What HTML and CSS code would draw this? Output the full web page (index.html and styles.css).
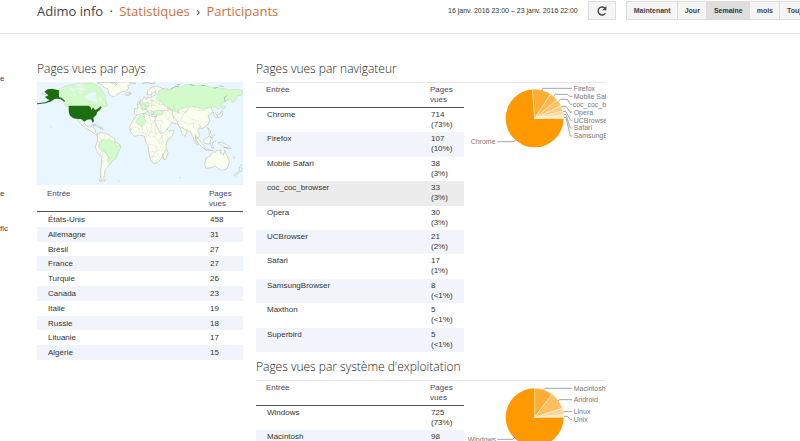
FILE: index.html
```html
<!DOCTYPE html>
<html lang="fr">
<head>
<meta charset="utf-8">
<title>Adimo info · Statistiques › Participants</title>
<link rel="stylesheet" href="styles.css">
</head>
<body>
<header class="topbar">
  <h1 class="crumbs">Adimo info <span class="sep">·</span> <a href="#">Statistiques</a> <span class="sep">›</span> <a href="#">Participants</a></h1>
  <div class="toolbar">
    <span class="range">16 janv. 2016 23:00 – 23 janv. 2016 22:00</span>
    <button class="btn refresh" type="button" aria-label="Actualiser">
      <svg viewBox="0 0 12 12" width="12" height="12"><path d="M9.4 8.3A4 4 0 1 1 9 3.2" fill="none" stroke="#444" stroke-width="1.4"/><path d="M10.4 1v4.2H6.2z" fill="#444"/></svg>
    </button>
    <div class="group">
      <button class="btn" type="button">Maintenant</button>
      <button class="btn" type="button">Jour</button>
      <button class="btn active" type="button">Semaine</button>
      <button class="btn" type="button">mois</button>
      <button class="btn" type="button">Toujours</button>
    </div>
  </div>
</header>
<main class="content">
  <nav class="side">
    <a href="#">e</a>
    <a href="#" class="far">e</a>
    <a href="#" class="near">fic</a>
  </nav>
  <section class="countries">
    <h2>Pages vues par pays</h2>
    <svg class="map" viewBox="20 81 618 309" role="img" aria-label="Carte du monde">
      <rect x="20" y="81" width="618" height="309" fill="#eaf6fe"/>
      <g class="land">
        <path d="M200 83l14 5 8 10 10 3 3 14 8 8 9 3 9-9 13-7 13-2 8-8-3-8 8-3-1-6 8-3z"/>
        <path d="M284 116l7-5 9 1 3 5-9 5-8-1z"/>
        <path d="M129 189l20 1 8 5 5 10 5 5 6 6 9-1 4-6 7 1-4 8 2 4 5 1-1 9 8 5-4 3-10-7-8-6-12-5-9-7-12-12-7-12-6-4z"/>
        <path d="M187 210l8-2 12 6 8 5-9-1-9-6zM208 218l7 1 5 4-9-1z"/>
        <path d="M201 238l6-5 9 1 10 1 10 5 8 6 9 5 1 10 15 8 1 8-8 14-3 13-12 7-7 14-10 13-6 8-2 16-2 9 3 8-6-2-6-10v-18l2-20 1-22-12-14-7-16 4-13 3-7z"/>
        <path d="M312 176l1-15 12-2-5-9 10-8 7-8 4-10 4 7 8-3 14-3 10-7-1-9-7 4-9 7-10-3 1-9 13-10 12-5 12 3 7 5 18 1v78l-13-2-12-5-5 4-3 6-7-5-5-9-7-2 6 10-3 2-9-10-8 2-9 7-7 8z"/>
        <path d="M329 133l6 4 4 10 2 4-12 1 3-8zM322 141l6-1-1 7-6 2z"/>
        <path d="M318 181l12-5 16-1 10 6 15 4 16-1 9 3 2 9 8 20 9 13 17-3-7 17-15 16-3 15 1 12-11 11-1 10-8 9-8 8-12 1-8-12-4-18-2-18-8-17-4-17-15-3-14 4-12-13-3-16 10-19z"/>
        <path d="M403 290l8-4 2 9-7 20-6-2-1-13z"/>
        <path d="M385 166l18 1 12-3 15 2 10 7 16-3 20 1 12 14-7 20-9 15-7 24-9-7-8-20-4-9-20-5-5 9-18 21-10 3-9-16-9-21 3-9 4-10-17-2z"/>
        <path d="M429 152l17-3 20-5 21 8 18 3 16-4 18 3 8 13-3 8-11 7 5 13-4 12-16 13-14-1-2 8 7 13-6 11-8-12 1 20 7 12-9-8-6-17-8-16-16-7-18-9-7-18-14-19z"/>
        <path d="M548 173l5-2 8 13-4 5-6-8zM561 181l8-2 6-13 3 2-2 14-13 7z"/>
        <path d="M575 157l6-4 5 5-8 3zM535 223l6 4-1 8 8 9-2 6-9-8zM495 246l10 6 13 18 7 9-6 1-16-15zM519 255l16-10 8 4-6 18-14-2zM522 282l18 2 8 3-20-1zM540 264l11-3-6 6 5 13-6-2zM563 263l11-1 17 9 12 10-16-3-15-9z"/>
        <path d="M527 309l11-5 9-13 8 1 5-7 12 1-2 8 9 7 5-15 4 13 7 12 2 12-7 17-15 7-11-6-9-8-13 5-15 2-4-13z"/>
        <path d="M627 336l9 5-5 10-4-5zM623 350l4 2-13 12-3-3z"/>
        <path d="M206 374l8 4-4 3zM225 374h4M264 379h3M446 368h4M60 215l3 2M608 305l6 4"/>
      </g>
      <g class="some">
        <path d="M86 104l20-12 36-6 25-2 22 1 20 11 7 13 8 12 2 15 7 15-9 4-10-1-13 8-15 5-7-7-12-5h-59l-7-10-9-18z"/>
        <path d="M377 135l5-14 3-13 9-6 13 5 12-5 17-6 19-1 15-7 25 4 23-1 20 5 33 2 26 6 27-1 13 5-2 12-13 2-9 15-7 7-6-12-13 6-15 8 2 8-8 9-17-9-27 9-23-5-13-5-25 6-17 5 2 10-14-5-14-8-17-9-12-14z"/>
        <path d="M207 261l10-8 12 3 8-3 8 6 9 3 1 7 15 5 1 7-9 15-4 14-12 7-6 12-10-11 4-13-8-12-13-7-9-9z"/>
        <path d="M324 189l5-7 12-4 2 14 4 10-13 14-18-14zM369 169l12-4 15 3 2 9-11 3-15-1zM329 150l13-4 8 8-3 9-11 2zM343 143l11-2 2 14-10 1zM341 162l7-3 7 12 5 4-3 3-8-10zM362 134l9 1-2 5-8-1z"/>
      </g>
      <path class="lakes" d="M115 97l17 4 20-4 17 6-12 5-18-5-12 5zM132 90l18-3 14 4-12 3zM163 125l8-8 18-6 8 3-1 13 5 8 2 9-9-5-14-4-8 1zM126 115l13 5-4 4zM145 108l10 3 1 5-7-3zM205 126l7 5 4 10-8-3z"/>
      <g class="top">
        <path d="M42 110l10-7 13-2 21 5v20l8 3 10 8-1 4-12-8-11-2-8 1-8 7-18 6-26 3v-3l25-3 13-7-7-3-7-6 10-5z"/>
        <path d="M115 152h59l6 3 4 11 4-9 6 8 9-4 8-7 3 3-5 8-8 6-3 9-9 8 2 11-4 4-5-10-12 1-8 6-8-7-12-1-14-3-10-8-3-14z"/>
      </g>
      <path class="borders" d="M207 236l-1 13 9 4M225 237l-2 15M239 242l-3 12M199 258l10 4-1 15 13 14M224 288l-7 12 1 20-7 23 1 25M216 285l-7 10M225 291l13 21M232 113l9 7M340 177l4 18 17 13 13-9v-17M357 182l4 16M374 197h22M327 205l9 8 2 22M305 216l17 1 9 12M316 229l18 4 13 2M347 215l5 13-7 18M365 208l-4 22-10 17M361 230l17 6 18-8M375 206v28M396 199l-6 14 2 20M354 247l19-2 10 12 16 5M373 245l6-11M392 235l7 26M399 239l-12 16M353 268l23 2 5 21-24-1M381 262l17 8M376 290l-10 15v18M382 286l17-2M380 294l8 15-10 9M358 307l18-3M404 239l12 10-16 15"/>
      <path class="borders" d="M402 169l6 20 12 12 10-3M410 166l12 13-7 15M426 168l3 25M438 175l-9 14 6 15M440 172l18 6-7 19-13 5M458 178l12-8M429 152l5 18 16-5 14 6 11-12 17-4M475 160l-14 14M488 153l8 13 20 1 18-11M469 179l13 14 23 5M454 198l21 10 13-4 10-4M489 204l2 15M502 199l9 19M505 208l9 7M352 110l-2 20-4 7M365 104l-3 29M373 97l5 28M356 144l13 4 12-7M357 153l15-2 15 8M362 140l2 19 15 5M370 137l12 9 19 4M321 160l-2 16M327 158l14 5M352 161l14 8M389 134l-3 14 8 5M401 164l10-7 13 5"/>
      <path class="islands" d="M239 83l19 2M262 86l-9 7M303 84l14 1M335 85l17-2 14 3 9-3M421 103l12-8 14-2M440 89l11-2M478 88l14 4M512 91l13 1M568 92l12 3M585 141l-3-14 9-5M291 119l9-4M34 116l8 2M529 218l7 3M550 238l3 4M554 257l2 4M579 276l15 4M301 222l4 2M631 329l4 4M550 101l13-5"/>
    </svg>
    <table class="data plain">
      <thead><tr><th scope="col">Entrée</th><th scope="col" class="num">Pages vues</th></tr></thead>
      <tbody>
        <tr><td>États-Unis</td><td>458</td></tr>
        <tr><td>Allemagne</td><td>31</td></tr>
        <tr><td>Brésil</td><td>27</td></tr>
        <tr><td>France</td><td>27</td></tr>
        <tr><td>Turquie</td><td>26</td></tr>
        <tr><td>Canada</td><td>23</td></tr>
        <tr><td>Italie</td><td>19</td></tr>
        <tr><td>Russie</td><td>18</td></tr>
        <tr><td>Lituanie</td><td>17</td></tr>
        <tr><td>Algérie</td><td>15</td></tr>
      </tbody>
    </table>
  </section>
  <div class="tech">
    <section>
      <h2>Pages vues par navigateur</h2>
      <div class="panel">
        <table class="data full">
          <thead><tr><th scope="col">Entrée</th><th scope="col" class="num">Pages vues</th></tr></thead>
          <tbody>
            <tr><td>Chrome</td><td>714<br>(73%)</td></tr>
            <tr><td>Firefox</td><td>107<br>(10%)</td></tr>
            <tr><td>Mobile Safari</td><td>38<br>(3%)</td></tr>
            <tr class="hover"><td>coc_coc_browser</td><td>33<br>(3%)</td></tr>
            <tr><td>Opera</td><td>30<br>(3%)</td></tr>
            <tr><td>UCBrowser</td><td>21<br>(2%)</td></tr>
            <tr><td>Safari</td><td>17<br>(1%)</td></tr>
            <tr><td>SamsungBrowser</td><td>8<br>(&lt;1%)</td></tr>
            <tr><td>Maxthon</td><td>5<br>(&lt;1%)</td></tr>
            <tr><td>Superbird</td><td>5<br>(&lt;1%)</td></tr>
          </tbody>
        </table>
        <svg class="pie" viewBox="-3 39 426 210" role="img" aria-label="Répartition par navigateur">
          <circle cx="209" cy="145" r="87" fill="#ff9900"/>
          <g stroke="#fff4e0" stroke-width="2">
            <path d="M209 145L202 58A87 87 0 0 1 257 72z" fill="#ffad33"/>
            <path d="M209 145L257 72A87 87 0 0 1 276 90z" fill="#ffb84d"/>
            <path d="M209 145L276 90A87 87 0 0 1 288 108z" fill="#ffc266"/>
            <path d="M209 145L288 108A87 87 0 0 1 293 123z" fill="#ffcc80"/>
            <path d="M209 145L293 123A87 87 0 0 1 295 134z" fill="#ffd699"/>
            <path d="M209 145L295 134A87 87 0 0 1 296 141z" fill="#ffe0b3"/>
            <path d="M209 145L296 141V146z" fill="#ffebcc"/>
          </g>
          <path class="leader" d="M230 62l3-7h88M266 79l5-6h37l6 6h8M281 93l6-5h20l9 15h6M289 109h14l12 17h7M294 124h8l15 27h5M296 134h7l13 40h6M297 142h6l13 56h6M97 215h50l5-6"/>
          <g class="label">
            <text x="326" y="63">Firefox</text><text x="326" y="87">Mobile Safari</text><text x="323" y="110">coc_coc_browser</text><text x="326" y="134">Opera</text><text x="326" y="158">UCBrowser</text><text x="326" y="181">Safari</text><text x="326" y="205">SamsungBrowser</text><text x="17" y="223">Chrome</text>
          </g>
        </svg>
      </div>
    </section>
    <section>
      <h2>Pages vues par système d'exploitation</h2>
      <div class="panel">
        <table class="data">
          <thead><tr><th scope="col">Entrée</th><th scope="col" class="num">Pages vues</th></tr></thead>
          <tbody>
            <tr><td>Windows</td><td>725<br>(73%)</td></tr>
            <tr><td>Macintosh</td><td>98<br>(10%)</td></tr>
          </tbody>
        </table>
        <svg class="pie" viewBox="-3 30 426 210" role="img" aria-label="Répartition par système d'exploitation">
          <circle cx="209" cy="139" r="87" fill="#ff9900"/>
          <g stroke="#fff4e0" stroke-width="2">
            <path d="M209 139V52A87 87 0 0 1 261 70z" fill="#ffad33"/>
            <path d="M209 139L261 70A87 87 0 0 1 292 112z" fill="#ffbf60"/>
            <path d="M209 139L292 112A87 87 0 0 1 296 131z" fill="#ffd699"/>
            <path d="M209 139L296 131V139z" fill="#ffebcc"/>
          </g>
          <path class="leader" d="M237 56l3-4h81M279 89l5-3h37M295 122h26M297 136h10l9 9h5M97 205h46l6-6"/>
          <g class="label">
            <text x="326" y="60">Macintosh</text><text x="326" y="93">Android</text><text x="326" y="130">Linux</text><text x="326" y="153">Unix</text><text x="8" y="213">Windows</text>
          </g>
        </svg>
      </div>
    </section>
  </div>
</main>
</body>
</html>
```
FILE: styles.css
```css
* { box-sizing: border-box; }
html, body { height: 100%; overflow: hidden; }
body {
  margin: 0;
  background: #fff;
  color: #333;
  font: 8px/10px "Liberation Sans", Arial, sans-serif;
}
a { text-decoration: none; }

.topbar {
  display: grid;
  grid-template-columns: 56% max-content;
  align-items: start;
  height: 34px;
  border-bottom: 1px solid #ebebeb;
}
.crumbs {
  margin: 0;
  padding-left: 37px;
  font: 13px/22px "Open Sans", sans-serif;
  color: #444;
  white-space: nowrap;
}
.crumbs a { color: #d2703a; }
.crumbs .sep { margin: 0 3px; }
.toolbar {
  display: flex;
  gap: 10px;
  align-items: center;
  padding-top: 1px;
}
.range { font-size: 7px; white-space: nowrap; }
.group { display: flex; }
.btn {
  height: 19px;
  margin: 0;
  padding: 0 6px 0 7px;
  border: 1px solid #dcdcdc;
  background: #f5f5f5;
  color: #444;
  font: bold 7px/10px "Liberation Sans", Arial, sans-serif;
}
.group .btn + .btn { border-left: 0; }
.btn.active { background: #dedede; color: #333; }
.refresh {
  display: flex;
  align-items: center;
  justify-content: center;
  width: 28px;
  padding: 0;
}

.content {
  display: grid;
  grid-template-columns: 24px 206fr 350fr 181fr;
  gap: 13px;
  padding-top: 26px;
}
.side {
  display: flex;
  flex-direction: column;
  padding-top: 14px;
}
.side a { color: #444; }
.side .far { margin-top: 105px; }
.side .near { margin-top: 25px; }

h2 {
  margin: 0;
  height: 22px;
  font: 300 12px/18px "Open Sans", sans-serif;
  color: #222;
  white-space: nowrap;
}
.map { display: block; width: 100%; margin-bottom: 2px; }
.land path { fill: #fafff0; stroke: #bcc2bb; stroke-width: 2; }
.some path { fill: #d3facb; stroke: #b3c4ae; stroke-width: 1; }
.top path { fill: #1d6e10; }
.lakes { fill: #eaf6fe; }
.borders { fill: none; stroke: #c3c5b6; stroke-width: 1; }
.islands { fill: none; stroke: #9fa8a8; stroke-width: 2; }

.data {
  width: 100%;
  border-collapse: separate;
  border-spacing: 0;
  table-layout: fixed;
}
.data th, .data td { text-align: left; vertical-align: top; }
.data th {
  padding: 2px 10px;
  border-bottom: 1px solid #555;
  color: #4a4560;
  font-weight: normal;
}
.data .num { width: 36px; padding-right: 4px; padding-left: 2px; }
.data td { padding: 2px 0 2px 11px; }
.data td + td { padding-left: 3px; }
.data tbody tr:nth-child(even) { background: #f1f5fb; }
.data tbody tr.hover { background: #ececec; }
.plain { height: 173px; }
.plain td { padding-top: 3px; padding-bottom: 1px; }
.full { height: 269px; }

.panel {
  display: grid;
  grid-template-columns: 208fr 142fr;
  align-items: start;
  border-top: 1px solid #e8e8e8;
}
.tech section { margin-bottom: 6px; }
.pie { display: block; width: 100%; }
.leader { fill: none; stroke: #777; stroke-width: 2; }
.label { fill: #777; font: 21px "Liberation Sans", Arial, sans-serif; }
```
